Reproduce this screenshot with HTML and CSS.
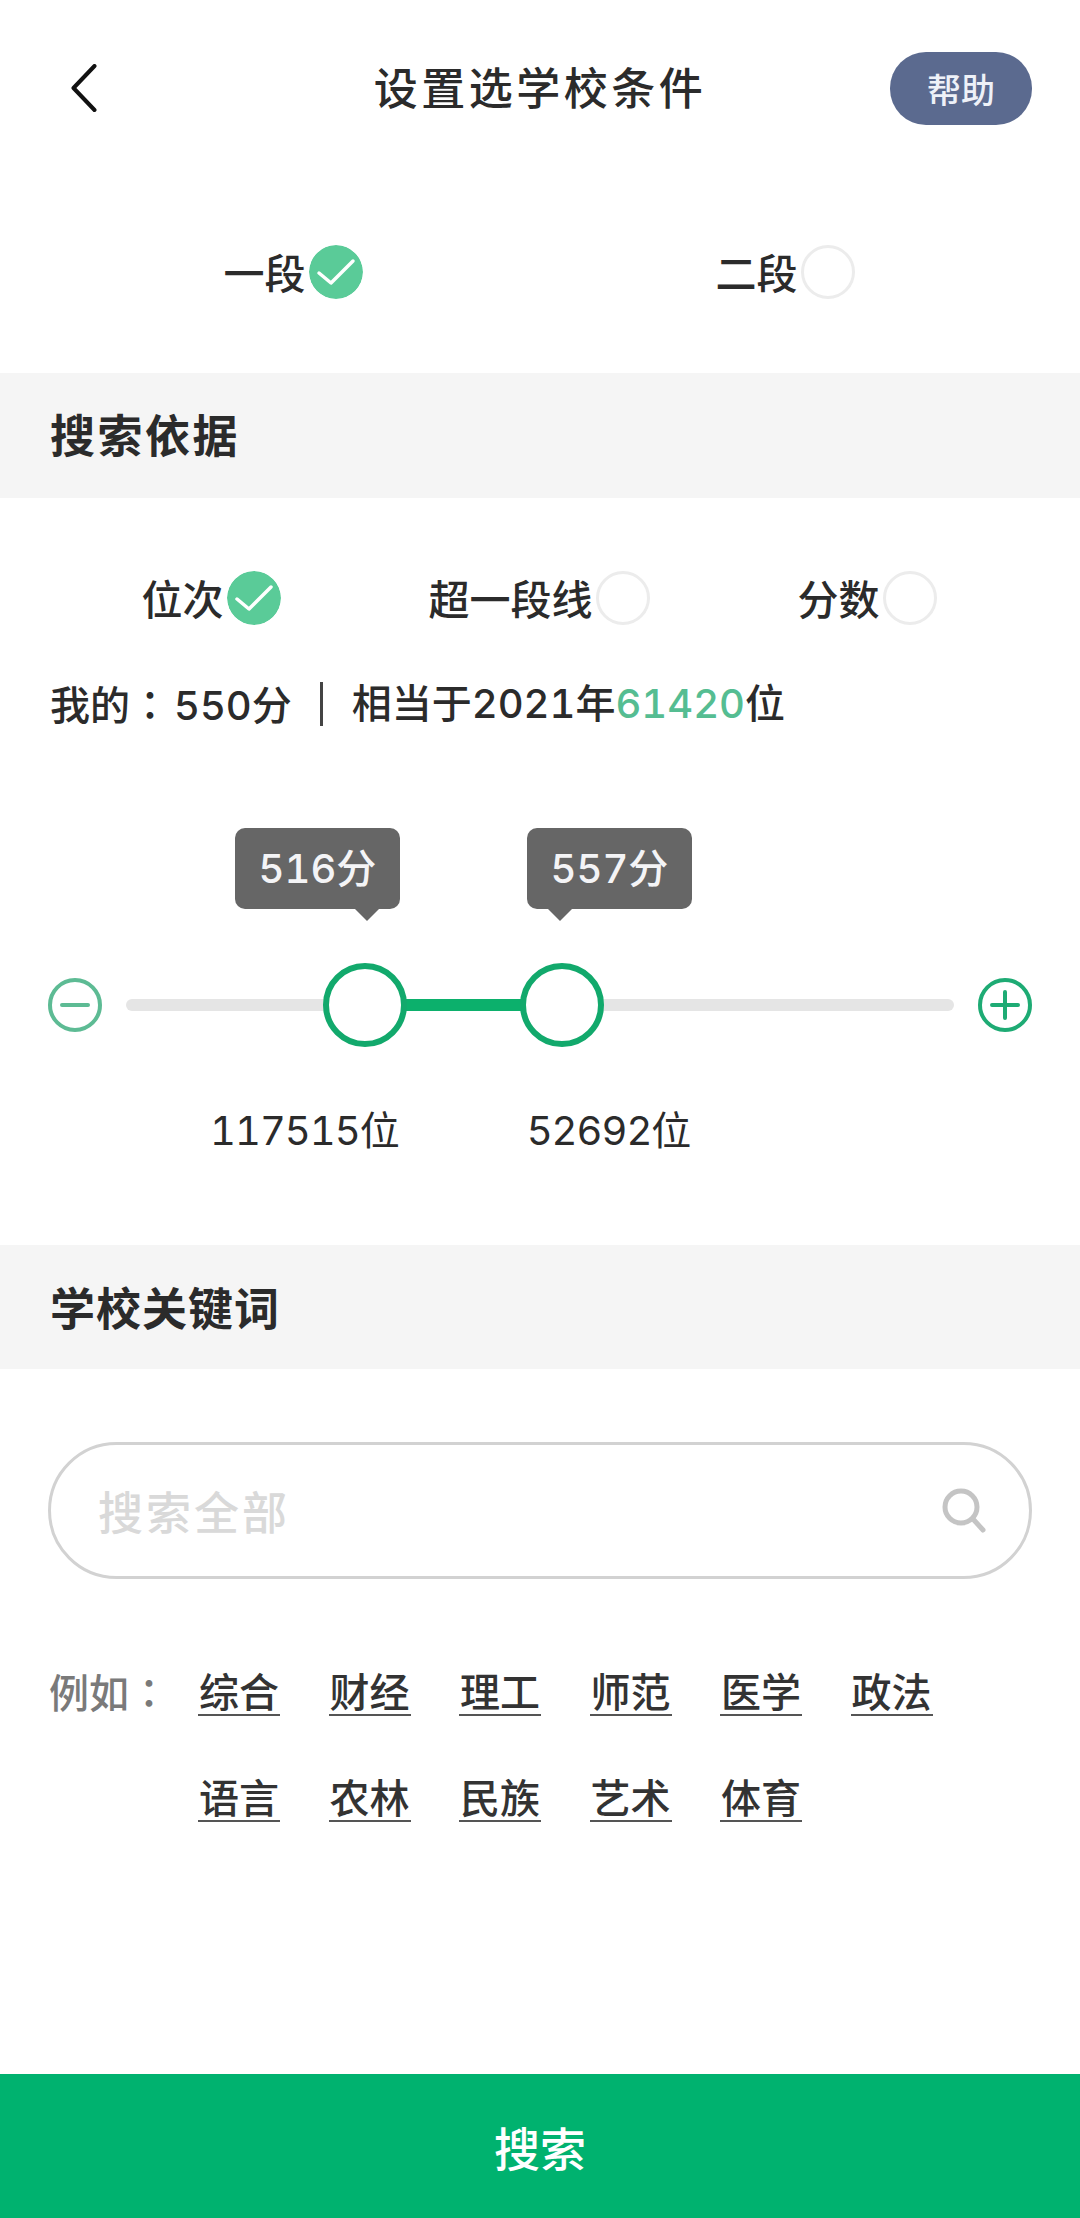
FILE: index.html
```html
<!DOCTYPE html>
<html lang="zh-CN">
<head>
<meta charset="utf-8">
<title>设置选学校条件</title>
<link rel="stylesheet" href="styles.css">
</head>
<body>
<div class="page">
  <header class="topbar">
    <svg class="back" width="26" height="48" viewBox="0 0 26 48"><path d="M23.5 2 L2.5 24 L23.5 46" fill="none" stroke="#111" stroke-width="4" stroke-linecap="round" stroke-linejoin="round"/></svg>
    <h1 class="title">设置选学校条件</h1>
    <button class="help">帮助</button>
  </header>

  <div class="options grade">
    <div class="option"><span>一段</span><svg class="radio" viewBox="0 0 54 54"><circle cx="27" cy="27" r="27" fill="#5acb98"/><path d="M10 28 L22 38 L44 16" fill="none" stroke="#fff" stroke-width="3.5" stroke-linecap="round" stroke-linejoin="round"/></svg></div>
    <div class="option"><span>二段</span><i class="radio empty"></i></div>
  </div>

  <h2 class="section basis-title">搜索依据</h2>

  <div class="options basis">
    <div class="option"><span>位次</span><svg class="radio" viewBox="0 0 54 54"><circle cx="27" cy="27" r="27" fill="#5acb98"/><path d="M10 28 L22 38 L44 16" fill="none" stroke="#fff" stroke-width="3.5" stroke-linecap="round" stroke-linejoin="round"/></svg></div>
    <div class="option"><span>超一段线</span><i class="radio empty"></i></div>
    <div class="option"><span>分数</span><i class="radio empty"></i></div>
  </div>

  <p class="summary"><span>我的<b class="colon" lang="zh-TW">：</b>550分</span><i class="divider"></i><span>相当于2021年<em class="rank">61420</em>位</span></p>

  <div class="slider">
    <svg class="step" viewBox="0 0 54 54"><circle cx="27" cy="27" r="25" fill="none" stroke="#5dbb94" stroke-width="4"/><path d="M14 27 H40" stroke="#5dbb94" stroke-width="4" stroke-linecap="round"/></svg>
    <div class="track">
      <div class="fill"></div>
      <div class="thumb low"></div>
      <div class="thumb high"></div>
      <div class="tip tip-low">516分</div>
      <div class="tip tip-high">557分</div>
    </div>
    <svg class="step" viewBox="0 0 54 54"><circle cx="27" cy="27" r="25" fill="none" stroke="#1eab74" stroke-width="4"/><path d="M14 27 H40 M27 14 V40" stroke="#1eab74" stroke-width="4" stroke-linecap="round"/></svg>
  </div>

  <div class="ranks"><span>117515位</span><span>52692位</span></div>

  <h2 class="section keywords">学校关键词</h2>

  <div class="search">
    <span class="placeholder">搜索全部</span>
    <svg class="search-icon" width="46" height="46" viewBox="0 0 46 46"><circle cx="20" cy="19" r="16" fill="none" stroke="#c4c4c4" stroke-width="5"/><path d="M32 31 L42 42" stroke="#c4c4c4" stroke-width="5" stroke-linecap="round"/></svg>
  </div>

  <div class="examples">
    <span class="eg">例如<b class="colon" lang="zh-TW">：</b></span>
    <div class="tags">
      <a>综合</a><a>财经</a><a>理工</a><a>师范</a><a>医学</a><a>政法</a>
      <a>语言</a><a>农林</a><a>民族</a><a>艺术</a><a>体育</a>
    </div>
  </div>

  <footer class="submit">搜索</footer>
</div>
</body>
</html>
```
FILE: styles.css
```css
* { box-sizing: border-box; }
html, body { margin: 0; padding: 0; background: #fff; }
body { font-family: Inter, "Noto Sans CJK SC", "Noto Sans", sans-serif; color: #2b2b2b; font-variant-numeric: tabular-nums; }
.page { width: 1080px; height: 2218px; display: flex; flex-direction: column; overflow: hidden; }
.colon { font-family: "Noto Sans CJK TC", sans-serif; font-weight: 500; }

.topbar { height: 176px; flex: none; display: flex; align-items: center; justify-content: space-between; padding: 0 48px 0 71px; position: relative; }
.back { display: block; }
.title { position: absolute; left: 0; right: 0; margin: 0; padding-top: 2px; text-align: center; font-size: 44px; font-weight: 500; letter-spacing: 3.5px; line-height: 60px; color: #2b2b2b; }
.help { width: 142px; height: 73px; border: 0; border-radius: 36px; background: #5b6a8f; color: #eef1f8; font: 500 34px/73px "Noto Sans CJK SC", sans-serif; padding: 0; position: relative; }

.options { display: flex; justify-content: center; flex: none; }
.grade { gap: 353px; height: 197px; padding: 0 2px 5px 0; align-items: center; }
.basis { gap: 148px; height: 54px; margin-top: 73px; padding-right: 2px; align-items: center; }
.option { display: flex; align-items: center; gap: 3px; font-size: 41px; font-weight: 500; line-height: 54px; }
.option span { padding-top: 3px; }
.radio { width: 54px; height: 54px; display: block; flex: none; border-radius: 50%; }
.radio.empty { border: 3px solid #ececec; }

.section { margin: 0; flex: none; height: 125px; background: #f5f5f5; padding: 0 0 4px 50px; display: flex; align-items: center; font-size: 45px; font-weight: 700; color: #2b2b2b; }
.basis-title { letter-spacing: 2.5px; }
.keywords { margin-top: 86px; height: 124px; padding-bottom: 2px; letter-spacing: 1px; }

.summary { margin: 51px 0 0 50px; height: 56px; display: flex; align-items: center; font-size: 40px; font-weight: 500; line-height: 56px; flex: none; }
.summary .colon { letter-spacing: 4px; }
.divider { width: 3px; height: 44px; background: #444; margin: 0 29px 0 28px; }
.rank { font-style: normal; color: #55bd92; }

.slider { margin: 246px 48px 0; display: flex; align-items: center; gap: 24px; flex: none; }
.step { width: 54px; height: 54px; flex: none; }
.track { flex: 1; height: 12px; border-radius: 6px; background: #e5e5e5; position: relative; }
.fill { position: absolute; left: 239px; width: 197px; top: 0; bottom: 0; background: #0cb06c; }
.thumb { position: absolute; top: -36px; width: 84px; height: 84px; border-radius: 50%; border: 6px solid #12a96c; background: #fff; }
.thumb.low { left: 197px; }
.thumb.high { left: 394px; }
.tip { position: absolute; top: -171px; width: 165px; height: 81px; border-radius: 10px; background: #666; color: #f4f4f6; font-size: 40px; font-weight: 500; line-height: 81px; text-align: center; }
.tip::after { content: ""; position: absolute; top: 81px; border-style: solid; border-width: 12px 12px 0; border-color: #666 transparent transparent; }
.tip-low { left: 109px; }
.tip-low::after { left: 120px; }
.tip-high { left: 401px; }
.tip-high::after { left: 21px; }

.ranks { margin-top: 71px; padding-left: 210px; display: flex; gap: 128px; font-size: 40px; font-weight: 400; letter-spacing: -1px; line-height: 56px; flex: none; }

.search { margin: 73px 48px 0; height: 137px; border: 3px solid #d2d2d2; border-radius: 69px; display: flex; align-items: center; justify-content: space-between; padding: 0 42px 0 47px; flex: none; }
.placeholder { font-size: 45px; font-weight: 500; color: #d9d9d9; letter-spacing: 3px; }
.search-icon { display: block; }

.examples { margin: 84px 0 0 49px; display: flex; flex: none; }
.eg { width: 149px; font-size: 40px; font-weight: 500; color: #7a7a7a; line-height: 56px; flex: none; }
.tags { display: grid; grid-template-columns: repeat(6, 82px); column-gap: 48.5px; row-gap: 53px; }
.tags a { font-size: 40px; font-weight: 500; line-height: 60px; height: 53px; border-bottom: 2px solid #555; color: #333; text-align: center; }

.submit { margin-top: auto; height: 144px; flex: none; background: #00b26f; color: #fff; display: flex; align-items: center; justify-content: center; font-size: 46px; font-weight: 500; }
```
